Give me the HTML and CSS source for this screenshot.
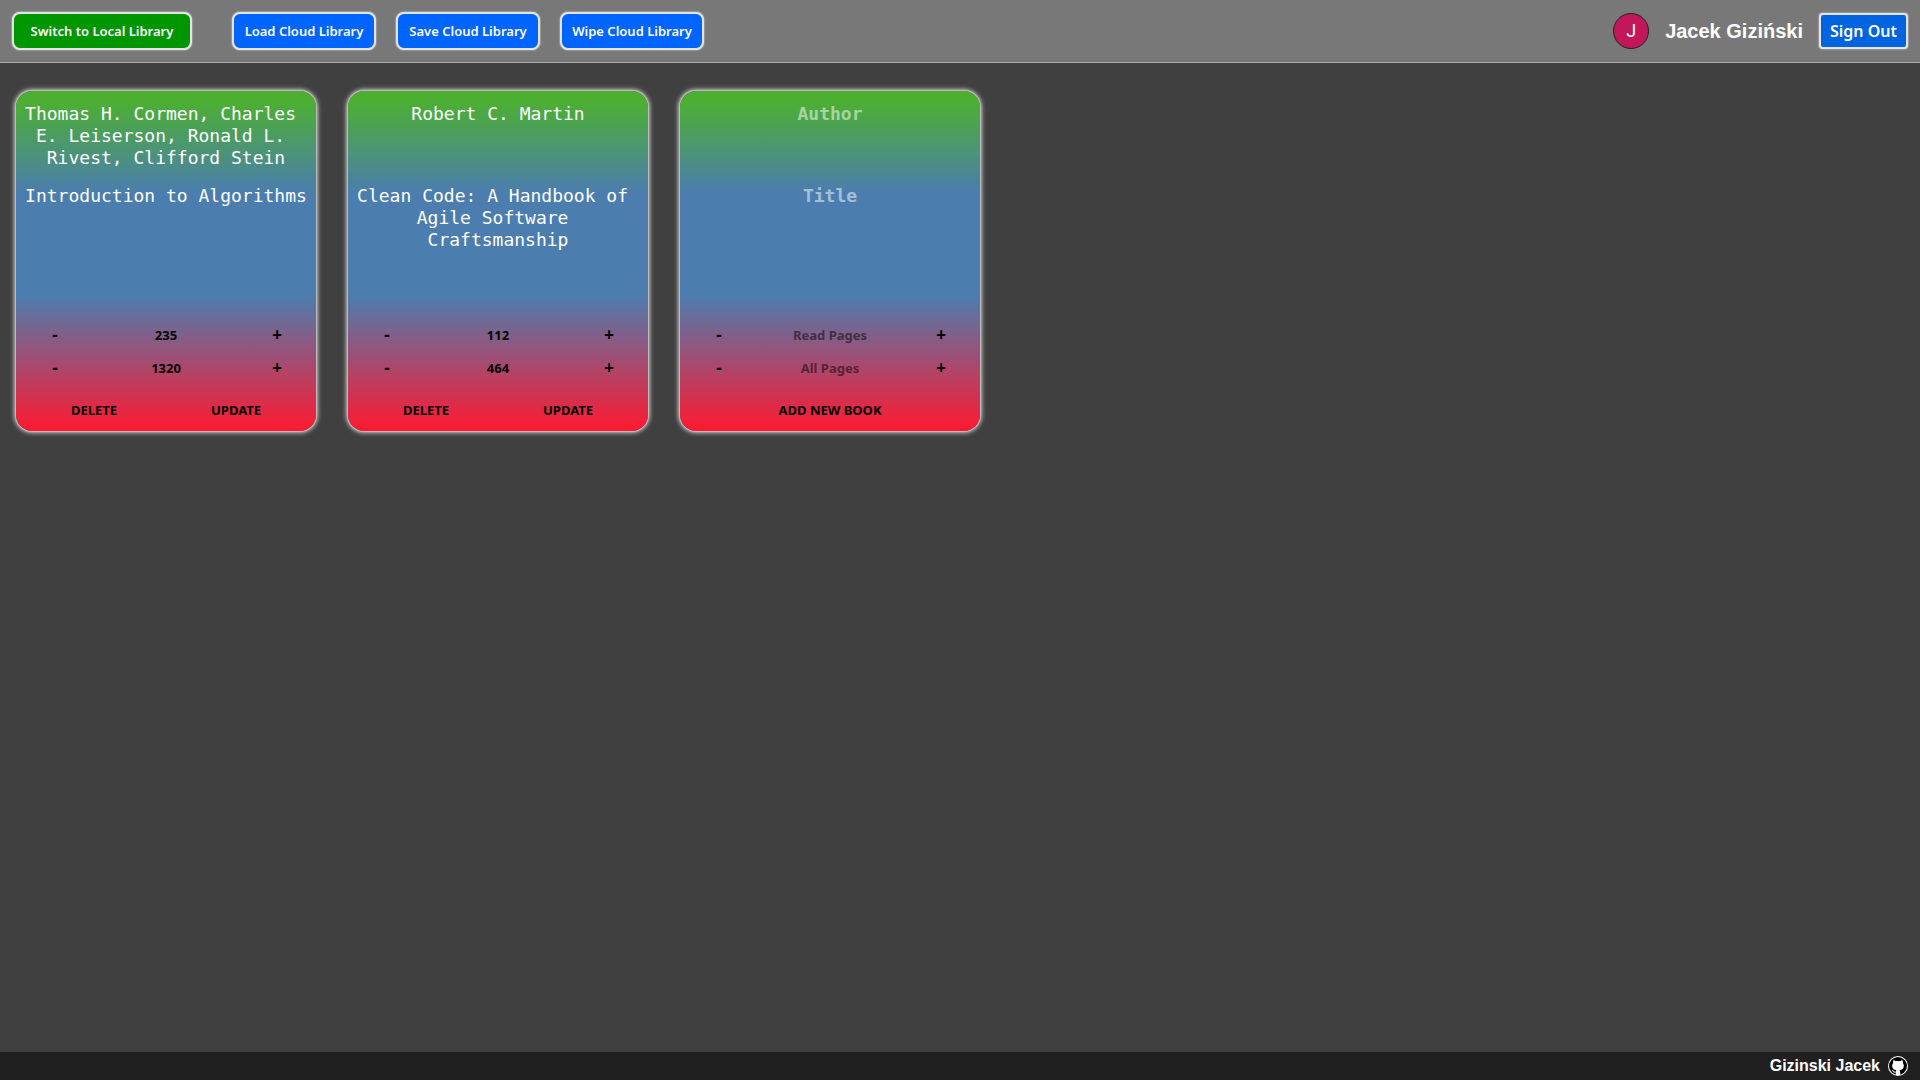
FILE: index.html
```html
<!DOCTYPE html>
<html lang="en">
<head>
<meta charset="utf-8">
<title>Library</title>
<link rel="stylesheet" href="styles.css">
</head>
<body>
<header class="topbar">
  <button class="btn btn-local" type="button">Switch to Local Library</button>
  <div class="cloud-actions">
    <button class="btn" type="button">Load Cloud Library</button>
    <button class="btn" type="button">Save Cloud Library</button>
    <button class="btn" type="button">Wipe Cloud Library</button>
  </div>
  <div class="account">
    <span class="avatar">J</span>
    <span class="user-name">Jacek Giziński</span>
    <button class="btn-signout" type="button">Sign Out</button>
  </div>
</header>
<main class="library">
  <form class="card">
    <textarea class="author" aria-label="Author" spellcheck="false">Thomas H. Cormen, Charles E. Leiserson, Ronald L. Rivest, Clifford Stein</textarea>
    <textarea class="title" aria-label="Title" spellcheck="false">Introduction to Algorithms</textarea>
    <div class="pages">
      <button class="step" type="button">-</button>
      <input class="count" type="text" aria-label="Read pages" value="235">
      <button class="step" type="button">+</button>
    </div>
    <div class="pages">
      <button class="step" type="button">-</button>
      <input class="count" type="text" aria-label="All pages" value="1320">
      <button class="step" type="button">+</button>
    </div>
    <div class="actions">
      <button class="action" type="button">DELETE</button>
      <button class="action" type="button">UPDATE</button>
    </div>
  </form>
  <form class="card">
    <textarea class="author" aria-label="Author" spellcheck="false">Robert C. Martin</textarea>
    <textarea class="title" aria-label="Title" spellcheck="false">Clean Code: A Handbook of Agile Software Craftsmanship</textarea>
    <div class="pages">
      <button class="step" type="button">-</button>
      <input class="count" type="text" aria-label="Read pages" value="112">
      <button class="step" type="button">+</button>
    </div>
    <div class="pages">
      <button class="step" type="button">-</button>
      <input class="count" type="text" aria-label="All pages" value="464">
      <button class="step" type="button">+</button>
    </div>
    <div class="actions">
      <button class="action" type="button">DELETE</button>
      <button class="action" type="button">UPDATE</button>
    </div>
  </form>
  <form class="card">
    <textarea class="author" aria-label="Author" placeholder="Author"></textarea>
    <textarea class="title" aria-label="Title" placeholder="Title"></textarea>
    <div class="pages">
      <button class="step" type="button">-</button>
      <input class="count" type="text" aria-label="Read pages" placeholder="Read Pages">
      <button class="step" type="button">+</button>
    </div>
    <div class="pages">
      <button class="step" type="button">-</button>
      <input class="count" type="text" aria-label="All pages" placeholder="All Pages">
      <button class="step" type="button">+</button>
    </div>
    <div class="actions">
      <button class="action" type="button">ADD NEW BOOK</button>
    </div>
  </form>
</main>
<footer class="footer">
  <a class="credit" href="#">Gizinski Jacek
    <svg class="github" viewBox="0 0 20 20" aria-hidden="true">
      <circle cx="10" cy="10" r="10" fill="#fff"/>
      <circle cx="10" cy="10" r="9" fill="#000"/>
      <path fill="#fff" d="M7.8 19V16.6C5.6 17 5 15.8 4.600 15 4.300 14.500 3.900 14.200 3.600 14 4.600 13.600 5.300 14.400 5.700 15 6.300 15.900 7.100 15.800 7.800 15.500 7.900 14.900 8.200 14.500 8.500 14.200 5.800 13.900 4.200 12.700 4.200 9.700 4.200 8.600 4.600 7.600 5.200 6.900 5 6.200 5 5.100 5.400 4.300 6.400 4.300 7.300 4.900 7.900 5.300 9.300 5 10.700 5 12.100 5.300 12.700 4.900 13.600 4.300 14.600 4.300 15 5.100 15 6.200 14.800 6.900 15.400 7.600 15.800 8.600 15.800 9.700 15.800 12.700 14.200 13.900 11.500 14.200 11.900 14.600 12.200 15.200 12.200 16V19Z"/>
    </svg>
  </a>
</footer>
</body>
</html>
```

FILE: styles.css
```css
* {
  box-sizing: border-box;
}

body {
  margin: 0;
  min-height: 100vh;
  display: flex;
  flex-direction: column;
  background: #404040;
  color: #fff;
  font-family: "Liberation Sans", Arial, sans-serif;
}

button,
input,
textarea {
  margin: 0;
  padding: 0;
  border: 0;
  background: none;
  font-family: "Noto Sans", sans-serif;
  font-weight: 700;
}

button {
  cursor: pointer;
}

.topbar {
  display: flex;
  align-items: center;
  gap: 40px;
  padding: 12px;
  background: #787878;
  border-bottom: 1px solid #aaa;
}

.cloud-actions {
  display: flex;
  gap: 20px;
}

.btn {
  min-width: 144px;
  height: 38px;
  padding: 0 8px;
  border: 2px solid #e4e4e4;
  border-radius: 8px;
  box-shadow: 0 0 2px #e4e4e4;
  background: #0064ff;
  color: #fff;
  font-size: 13px;
  font-weight: 600;
}

.btn-local {
  min-width: 180px;
  background: #009600;
}

.account {
  display: flex;
  align-items: center;
  gap: 16px;
  margin-left: auto;
}

.avatar {
  width: 36px;
  height: 36px;
  border: 1px solid #222;
  border-radius: 50%;
  background: #c2185b;
  font-family: Roboto, sans-serif;
  font-size: 18px;
  line-height: 34px;
  text-align: center;
}

.user-name {
  font-size: 20px;
  font-weight: 700;
}

.btn-signout {
  min-width: 89px;
  height: 36px;
  padding: 0 8px;
  border: 2px solid #e4e4e4;
  border-radius: 4px;
  box-shadow: 0 0 2px #e4e4e4;
  background: #0064e1;
  color: #fff;
  font-size: 16px;
  font-weight: 600;
}

.library {
  flex: 1;
  display: flex;
  flex-wrap: wrap;
  align-content: flex-start;
  gap: 32px;
  padding: 28px 16px;
}

.card {
  display: flex;
  flex-direction: column;
  width: 300px;
  padding: 12px 8px 4px;
  border-radius: 16px;
  box-shadow: 0 0 0 1px #bbb, 0 0 5px 1px #fff;
  background: linear-gradient(#4caf32 0%, #4caf32 3%, #4b7daf 30%, #4b7daf 60%, #ff1930 100%);
}

.author,
.title {
  color: #fff;
  font-family: "DejaVu Sans Mono", monospace;
  font-size: 18px;
  font-weight: 400;
  line-height: 22px;
  text-align: center;
  white-space: break-spaces;
  resize: none;
  overflow: hidden;
}

.author {
  height: 66px;
  margin-bottom: 16px;
}

.title {
  height: 110px;
  margin-bottom: 23px;
}

.author::placeholder,
.title::placeholder {
  color: #fff;
  opacity: 0.5;
  font-weight: 700;
}

.pages {
  display: flex;
  justify-content: space-between;
  height: 33px;
  padding: 0 11px;
}

.step {
  width: 40px;
  color: #000;
  font-size: 17px;
}

.count {
  width: 140px;
  color: #000;
  font-size: 13px;
  text-align: center;
}

.count::placeholder {
  color: #000;
  opacity: 0.5;
}

.actions {
  display: flex;
  justify-content: space-around;
  margin-top: 9px;
  height: 34px;
}

.action {
  padding: 0 8px;
  color: #000;
  font-size: 13px;
}

.footer {
  display: flex;
  justify-content: flex-end;
  padding: 4px 12px;
  background: #202020;
}

.credit {
  display: flex;
  align-items: center;
  gap: 8px;
  color: #fff;
  font-size: 16px;
  font-weight: 700;
  line-height: 20px;
  text-decoration: none;
}

.github {
  width: 20px;
  height: 20px;
}
```
